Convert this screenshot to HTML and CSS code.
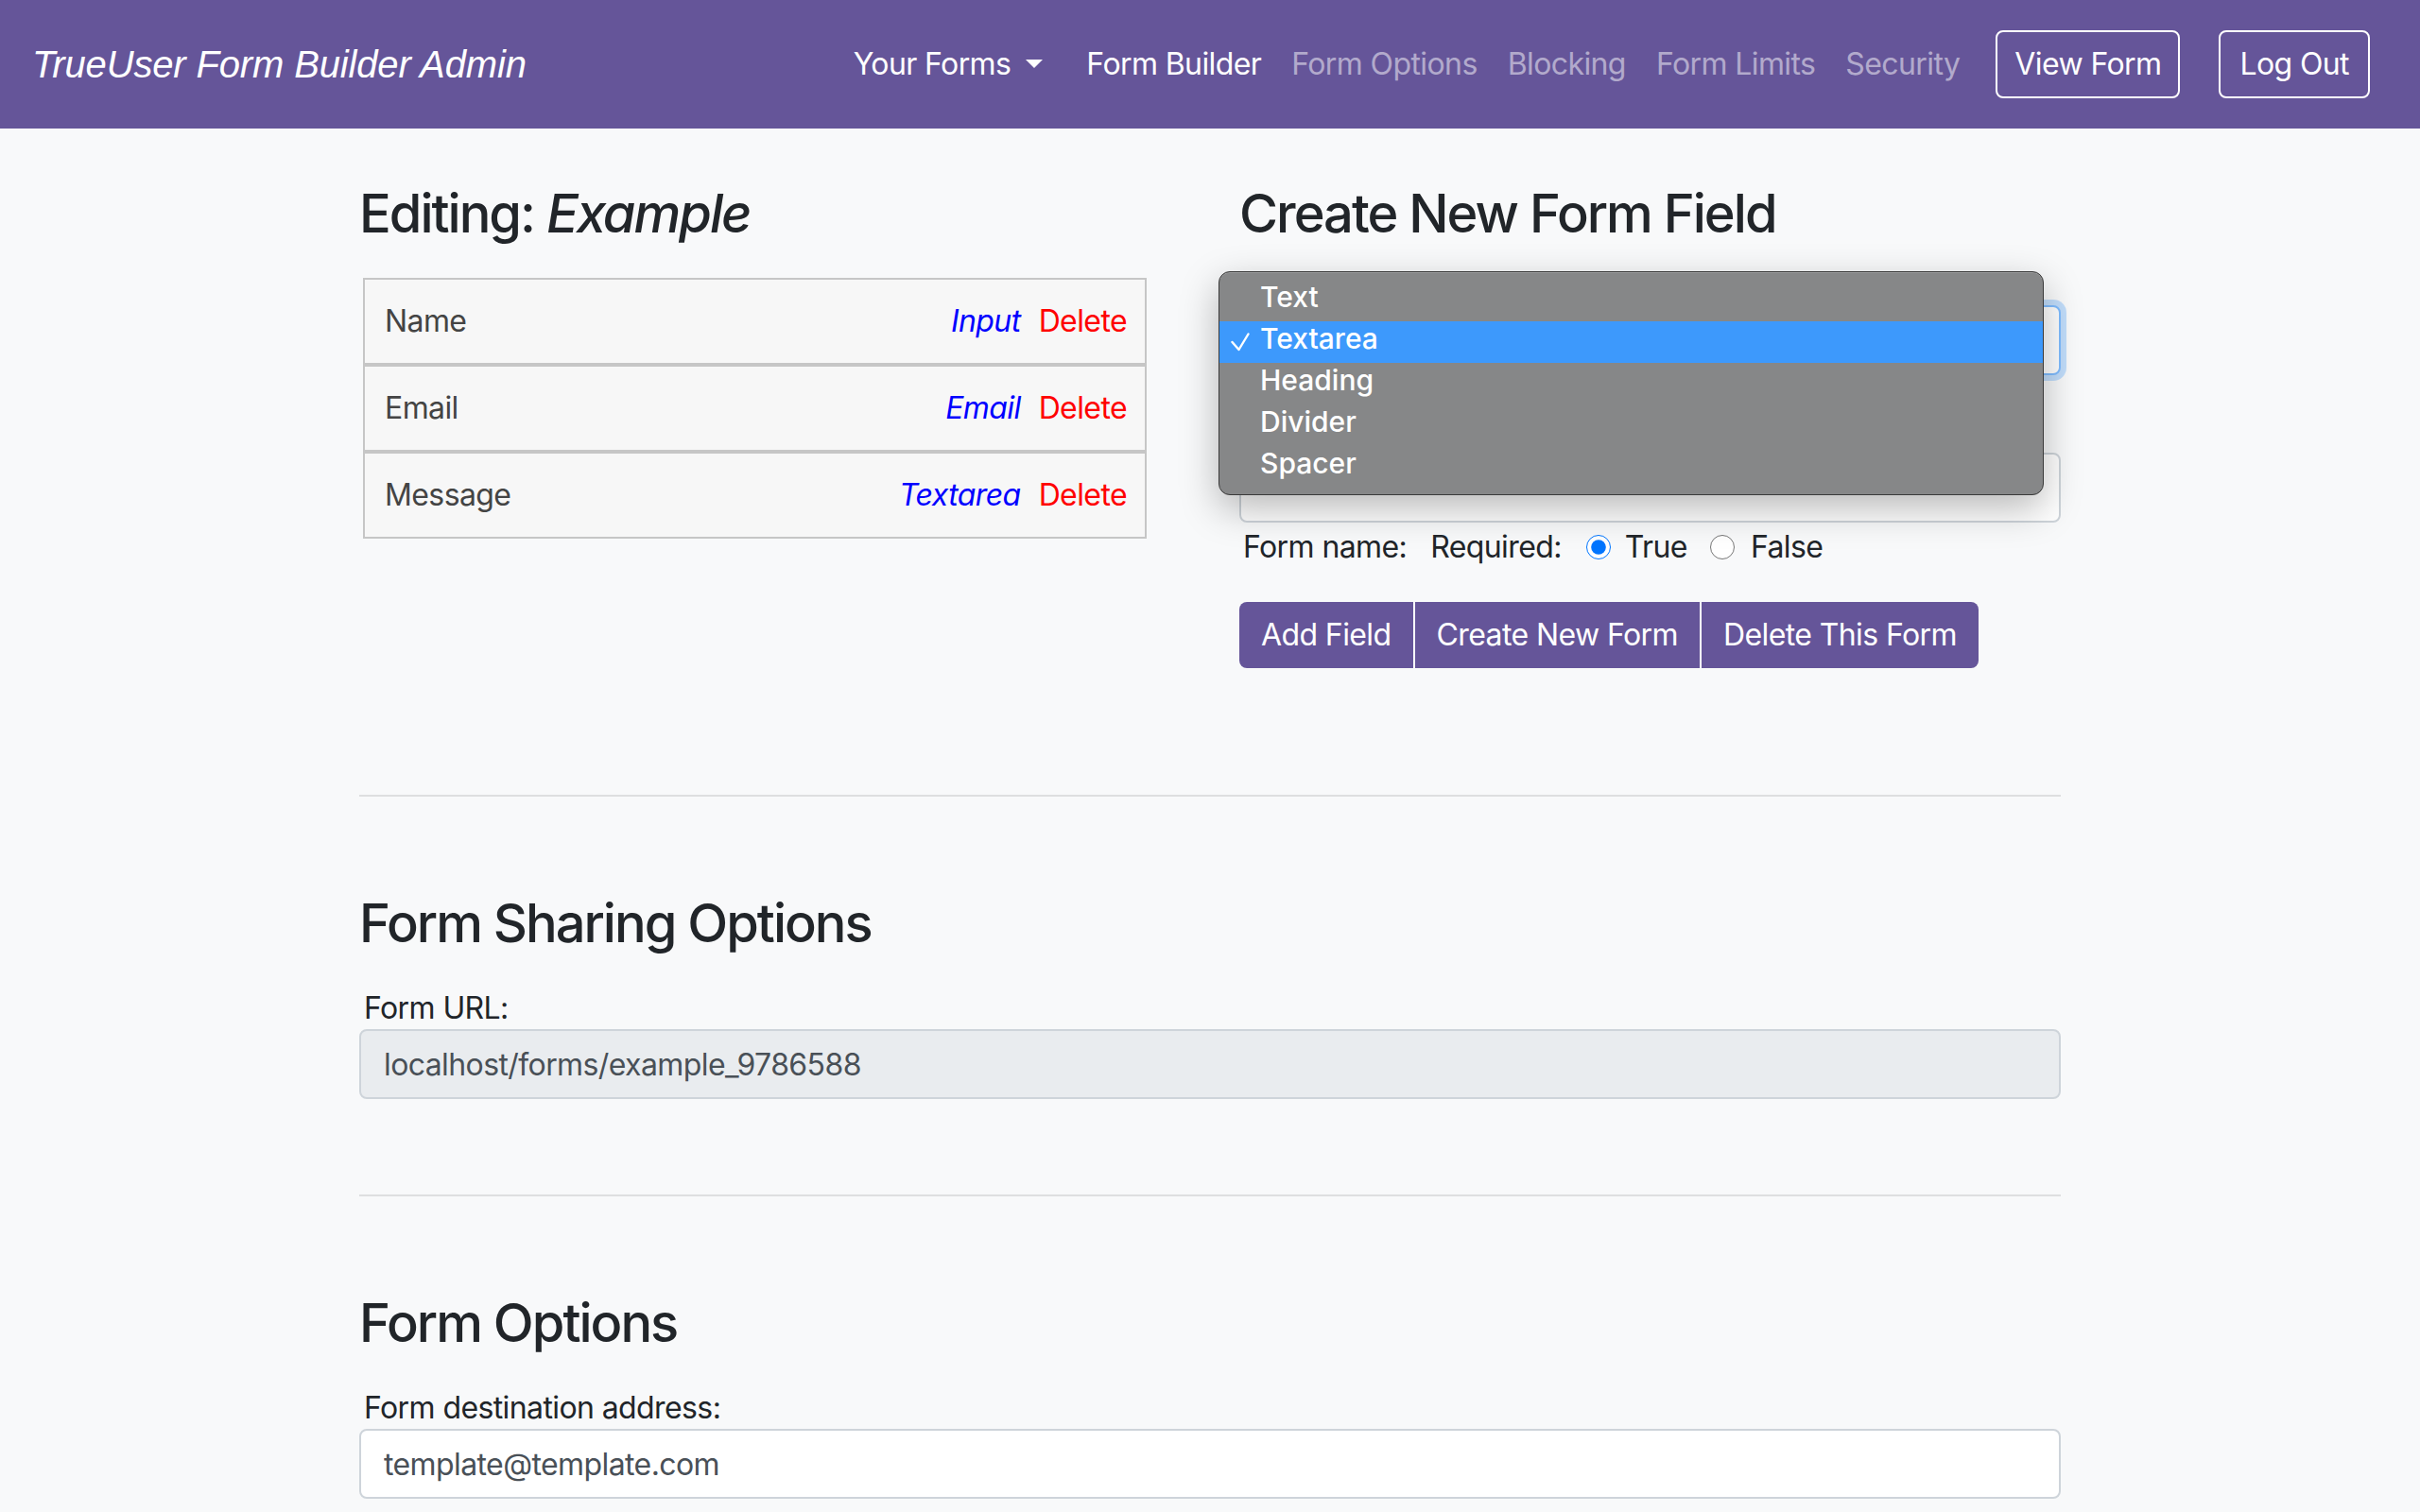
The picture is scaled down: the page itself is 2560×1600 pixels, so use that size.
FILE: index.html
```html
<!DOCTYPE html>
<html lang="en">
<head>
<meta charset="utf-8">
<title>TrueUser Form Builder Admin</title>
<link rel="stylesheet" href="styles.css">
</head>
<body>
<nav class="navbar">
  <a class="brand" href="#">TrueUser Form Builder Admin</a>
  <ul class="nav-links">
    <li class="nav-item dropdown"><a class="nav-link active" href="#">Your Forms<span class="caret"></span></a></li>
    <li class="nav-item"><a class="nav-link active" href="#">Form Builder</a></li>
    <li class="nav-item"><a class="nav-link" href="#">Form Options</a></li>
    <li class="nav-item"><a class="nav-link" href="#">Blocking</a></li>
    <li class="nav-item"><a class="nav-link" href="#">Form Limits</a></li>
    <li class="nav-item"><a class="nav-link" href="#">Security</a></li>
    <li class="nav-item"><a class="btn-outline view" href="#">View Form</a></li>
    <li class="nav-item"><a class="btn-outline logout" href="#">Log Out</a></li>
  </ul>
</nav>

<main class="container">
  <div class="row">
    <section class="col">
      <h3 class="heading">Editing: <em>Example</em></h3>
      <div class="field-list">
        <div class="field-row"><span>Name</span><span class="actions"><em class="type">Input</em><span class="delete">Delete</span></span></div>
        <div class="field-row"><span>Email</span><span class="actions"><em class="type">Email</em><span class="delete">Delete</span></span></div>
        <div class="field-row"><span>Message</span><span class="actions"><em class="type">Textarea</em><span class="delete">Delete</span></span></div>
      </div>
    </section>

    <section class="col">
      <h3 class="heading">Create New Form Field</h3>
      <div class="select-wrap">
        <div class="form-select focused"></div>
        <div class="popup">
          <div class="popup-item">Text</div>
          <div class="popup-item selected"><svg class="check" viewBox="0 0 20 20" width="20" height="20"><polyline points="1.5,10 8.5,18 18.5,1.5" fill="none" stroke="#fff" stroke-width="2.4" stroke-linecap="round" stroke-linejoin="round"/></svg>Textarea</div>
          <div class="popup-item">Heading</div>
          <div class="popup-item">Divider</div>
          <div class="popup-item">Spacer</div>
        </div>
      </div>
      <div class="form-control name-input"></div>
      <div class="options-line">
        <span class="opt-label">Form name:</span>
        <span class="opt-label req">Required:</span>
        <input class="radio" type="radio" name="req" checked><span class="radio-text">True</span>
        <input class="radio second" type="radio" name="req"><span class="radio-text">False</span>
      </div>
      <div class="btn-group">
        <button class="btn first">Add Field</button>
        <button class="btn">Create New Form</button>
        <button class="btn last">Delete This Form</button>
      </div>
    </section>
  </div>

  <hr class="divider">

  <section class="block">
    <h3 class="heading">Form Sharing Options</h3>
    <label class="field-label">Form URL:</label>
    <input class="form-control readonly" type="text" value="localhost/forms/example_9786588" readonly>
  </section>

  <hr class="divider">

  <section class="block">
    <h3 class="heading">Form Options</h3>
    <label class="field-label">Form destination address:</label>
    <input class="form-control" type="text" value="template@template.com">
  </section>
</main>
</body>
</html>
```
FILE: styles.css
```css
* { box-sizing: border-box; }

html, body { height: 100%; }

body {
  margin: 0;
  background: #f8f9fa;
  font-family: Inter, "Noto Sans", "DejaVu Sans", sans-serif;
  font-size: 32px;
  line-height: 48px;
  letter-spacing: -0.6px;
  color: #212529;
  overflow: hidden;
}

/* ---------- navbar ---------- */
.navbar {
  height: 136px;
  background: #655599;
  display: flex;
  align-items: center;
  justify-content: space-between;
  padding: 0 53px 0 34px;
}

.brand {
  font-family: "Liberation Sans", Arial, sans-serif;
  font-style: italic;
  font-size: 40px;
  line-height: 60px;
  letter-spacing: -0.15px;
  color: #fff;
  text-decoration: none;
}

.nav-links {
  display: flex;
  align-items: center;
  list-style: none;
  margin: 0;
  padding: 0;
}

.nav-link {
  display: block;
  padding: 0 16px;
  color: rgba(255, 255, 255, 0.5);
  text-decoration: none;
}

.nav-link.active { color: #fff; }

.dropdown { margin-right: 14px; }

.caret {
  display: inline-block;
  margin-left: 16px;
  vertical-align: 7px;
  border-top: 9px solid #fff;
  border-left: 9px solid transparent;
  border-right: 9px solid transparent;
}

.btn-outline {
  display: block;
  border: 2px solid #fff;
  border-radius: 8px;
  padding: 10px 20px;
  color: #fff;
  text-decoration: none;
}

.btn-outline.view { margin-left: 22px; padding: 10px 18px; }
.btn-outline.logout { margin-left: 41px; }

/* ---------- layout ---------- */
.container {
  width: 1800px;
  margin: 0 auto;
  padding-top: 57px;
}

.row {
  display: grid;
  grid-template-columns: 1fr 1fr;
  column-gap: 62px;
  align-items: start;
}

.heading {
  margin: 0;
  font-size: 56px;
  line-height: 67px;
  font-weight: 500;
  letter-spacing: -2px;
}

.heading em { font-style: italic; }

/* ---------- field list ---------- */
.field-list {
  width: 829px;
  margin: 34px 0 0 4px;
}

.field-row {
  display: flex;
  justify-content: space-between;
  border: 2px solid #c6c6c6;
  background: #f7f7f7;
  padding: 20px 19px 20px 21px;
  color: #444;
}

.type { color: #0000ff; font-style: italic; }
.delete { color: #ff0000; margin-left: 19px; }

/* ---------- create field ---------- */
.select-wrap {
  position: relative;
  margin-top: 63px;
}

.form-select {
  height: 74px;
  background: #fff;
  border: 2px solid #ced4da;
  border-radius: 8px;
}

.form-select.focused {
  border-color: #80bdff;
  box-shadow: 0 0 0 6px rgba(0, 123, 255, 0.22);
}

.popup {
  position: absolute;
  left: -22px;
  top: -36px;
  width: 873px;
  height: 237px;
  padding: 8px 0 7px;
  background: #868788;
  border: 1px solid #3a3a3a;
  border-radius: 12px;
  box-shadow: 0 14px 40px rgba(0, 0, 0, 0.28), inset 0 1px 0 rgba(255, 255, 255, 0.18);
  overflow: hidden;
  z-index: 5;
}

.popup-item {
  position: relative;
  height: 44px;
  line-height: 36px;
  padding-left: 43px;
  font-size: 30px;
  font-weight: 500;
  letter-spacing: 0;
  color: #fff;
}

.popup-item.selected { background: #3d99fc; }

.check {
  position: absolute;
  left: 12px;
  top: 12px;
}

.form-control {
  display: block;
  width: 100%;
  height: 74px;
  padding: 0 24px;
  background: #fff;
  border: 2px solid #ced4da;
  border-radius: 8px;
  font-family: inherit;
  font-size: 32px;
  letter-spacing: -0.6px;
  color: #495057;
  outline: none;
}

.form-control.readonly { background: #e9ecef; }

.name-input { margin-top: 82px; }

.options-line {
  display: flex;
  align-items: center;
  margin-top: 2px;
  padding-left: 4px;
  height: 48px;
}

.opt-label.req { margin-left: 25px; }

.radio {
  width: 26px;
  height: 26px;
  margin: 0 15px 0 26px;
  accent-color: #0075ff;
}

.radio.second { margin-left: 24px; margin-right: 17px; }

.btn-group {
  display: flex;
  margin-top: 34px;
}

.btn {
  height: 70px;
  padding: 0 23px;
  border: 0;
  background: #655599;
  color: #fff;
  font-family: inherit;
  font-size: 32px;
  letter-spacing: -0.6px;
  line-height: 70px;
}

.btn + .btn { border-left: 2px solid #fff; }
.btn.first { border-radius: 8px 0 0 8px; }
.btn.last { border-radius: 0 8px 8px 0; }

/* ---------- lower sections ---------- */
.divider {
  margin: 134px 0 0;
  border: 0;
  border-top: 2px solid rgba(0, 0, 0, 0.1);
}

.block + .divider { margin-top: 101px; }

.block .heading { margin-top: 101px; }

.field-label {
  display: block;
  margin-top: 34px;
  padding-left: 5px;
  line-height: 44px;
}
```
